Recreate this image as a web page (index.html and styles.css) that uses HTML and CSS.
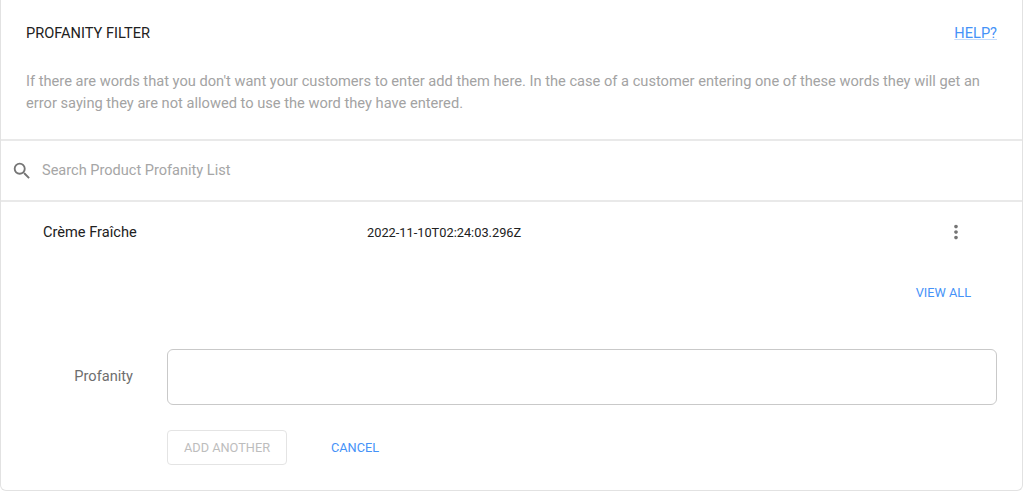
FILE: index.html
```html
<!DOCTYPE html>
<html lang="en">
<head>
<meta charset="utf-8">
<title>Profanity Filter</title>
<link rel="stylesheet" href="styles.css">
</head>
<body>
<main class="card">
  <section class="intro">
    <div class="intro-head">
      <h2 class="title">PROFANITY FILTER</h2>
      <a class="help" href="#">HELP?</a>
    </div>
    <p class="desc">If there are words that you don't want your customers to enter add them here. In the case of a customer entering one of these words they will get an error saying they are not allowed to use the word they have entered.</p>
  </section>
  <div class="search">
    <svg class="search-icon" viewBox="0 0 24 24" width="24" height="24"><path fill="#757575" d="M15.5 14h-.79l-.28-.27A6.47 6.47 0 0 0 16 9.5 6.5 6.5 0 1 0 9.5 16c1.61 0 3.09-.59 4.23-1.57l.27.28v.79l5 4.99L20.49 19l-4.99-5zm-6 0C7.01 14 5 11.99 5 9.5S7.01 5 9.5 5 14 7.01 14 9.5 11.99 14 9.5 14z"/></svg>
    <span class="search-text">Search Product Profanity List</span>
  </div>
  <div class="row">
    <span class="row-name">Crème Fraîche</span>
    <span class="row-date">2022-11-10T02:24:03.296Z</span>
    <svg class="row-menu" viewBox="0 0 24 24" width="24" height="24"><path fill="#757575" d="M12 8c1.1 0 2-.9 2-2s-.9-2-2-2-2 .9-2 2 .9 2 2 2zm0 2c-1.1 0-2 .9-2 2s.9 2 2 2 2-.9 2-2-.9-2-2-2zm0 6c-1.1 0-2 .9-2 2s.9 2 2 2 2-.9 2-2-.9-2-2-2z"/></svg>
  </div>
  <div class="view-all-row"><a class="link" href="#">VIEW ALL</a></div>
  <form class="form">
    <div class="field">
      <label class="field-label" for="profanity">Profanity</label>
      <input class="field-input" id="profanity" type="text">
    </div>
    <div class="actions">
      <button class="btn-disabled" type="button" disabled>ADD ANOTHER</button>
      <a class="link" href="#">CANCEL</a>
    </div>
  </form>
</main>
</body>
</html>
```
FILE: styles.css
```css
* { box-sizing: border-box; }
html, body { margin: 0; height: 100%; background: #fff; }
body { font-family: Roboto, "Liberation Sans", sans-serif; overflow: hidden; }
.card {
  width: 1023px;
  height: 491px;
  border: 1px solid #e2e2e2;
  border-top: 0;
  border-radius: 0 0 6px 6px;
  display: flex;
  flex-direction: column;
}
.intro { height: 141px; padding: 23px 25px 0; border-bottom: 2px solid #e9e9e9; }
.intro-head { display: flex; justify-content: space-between; align-items: center; height: 20px; }
.title { margin: 0; font-size: 14.6px; font-weight: 400; color: #212121; line-height: 20px; }
.help { font-size: 14.6px; color: #4592f8; text-decoration: underline; text-decoration-color: #c5dcfb; }
.desc { margin: 27px 0 0; font-size: 14.65px; line-height: 22px; color: #a3a3a3; }
.search { height: 61px; padding-left: 10px; display: flex; align-items: center; border-bottom: 2px solid #e9e9e9; }
.search-icon { width: 22px; height: 22px; flex: none; }
.search-text { margin-left: 9px; font-size: 14.55px; color: #a6a6a6; }
.row { height: 60px; display: flex; align-items: center; padding-left: 42px; }
.row-name { width: 324px; font-size: 14.6px; color: #212121; }
.row-date { font-size: 12.8px; color: #212121; }
.row-menu { margin-left: auto; margin-right: 55px; width: 22px; height: 22px; flex: none; }
.view-all-row { display: flex; justify-content: flex-end; padding-right: 51px; height: 30px; margin-top: 15px; align-items: center; }
.link { font-size: 12.75px; color: #4592f8; text-decoration: none; }
.form { padding-top: 42px; }
.field { display: flex; align-items: center; }
.field-label { width: 132px; padding-bottom: 2px; text-align: right; font-size: 14.6px; color: #6e6e6e; }
.field-input { margin-left: 34px; width: 830px; height: 56px; border: 1px solid #c9c9c9; border-radius: 6px; background: #fff; }
.actions { margin: 25px 0 0 166px; display: flex; align-items: center; gap: 44px; }
.btn-disabled { width: 120px; height: 35px; border: 1px solid #e4e4e4; border-radius: 4px; background: #fff; color: #bdbdbd; font: 12.75px Roboto, "Liberation Sans", sans-serif; }
```
